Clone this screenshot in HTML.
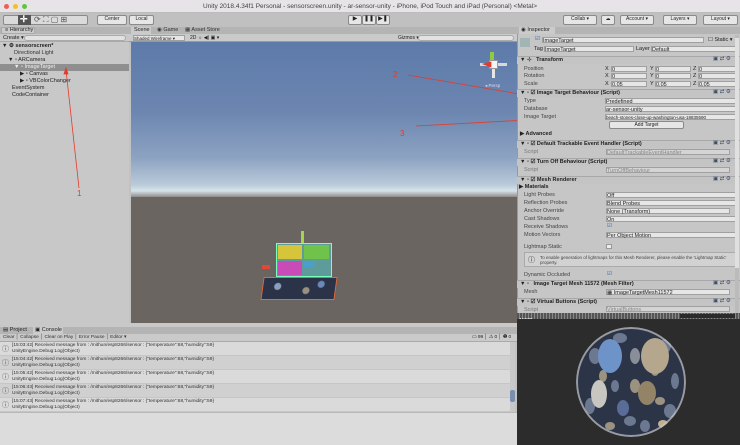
<!DOCTYPE html>
<html><head><meta charset="utf-8"><style>
*{margin:0;padding:0;box-sizing:border-box}
body{width:740px;height:445px;overflow:hidden;background:#c2c2c2;font-family:"Liberation Sans",sans-serif;font-size:5.5px;color:#222;position:relative}
.a{position:absolute}
.t{position:absolute;white-space:nowrap}
.fld{position:absolute;background:#e6e6e6;border:1px solid #a0a0a0;height:6px}
.hdr{position:absolute;left:517px;width:223px;height:8px;background:#c4c4c4;border-top:1px solid #a8a8a8;font-weight:bold}
.btn{position:absolute;background:#e6e6e6;border:1px solid #8a8a8a;border-radius:2px;height:9px;font-size:5px;text-align:center;line-height:7px}
.row{position:absolute;left:0;width:515px;height:14px;background:#dadada;border-bottom:1px solid #c6c6c6}
.row2{background:#d0d0d0}
</style></head><body>
<div class="a" style="left:0;top:0;width:740px;height:13px;background:#e6e4e6;border-bottom:1px solid #bcbcbc"></div>
<div class="a" style="left:4px;top:4px;width:5px;height:5px;border-radius:50%;background:#ec5f57"></div>
<div class="a" style="left:13px;top:4px;width:5px;height:5px;border-radius:50%;background:#f3be2e"></div>
<div class="a" style="left:22px;top:4px;width:5px;height:5px;border-radius:50%;background:#5fc440"></div>
<div class="t" style="left:0;width:740px;top:3px;text-align:center;font-size:6.5px;color:#444">Unity 2018.4.34f1 Personal - sensorscreen.unity - ar-sensor-unity - iPhone, iPod Touch and iPad (Personal) &lt;Metal&gt;</div>
<div class="a" style="left:0;top:13px;width:740px;height:14px;background:#c0c0c0"></div>
<div class="btn" style="left:3px;top:15px;width:85px;height:10px;background:#dadada"></div>
<div class="a" style="left:18px;top:15px;width:13px;height:10px;background:#555"></div>
<div class="t" style="left:20px;top:14px;color:#fff;font-size:9px;font-weight:bold">✛</div>
<div class="t" style="left:34px;top:15px;font-size:8px;color:#555">⟳ ⛶ ▢ ⊞</div>
<div class="btn" style="left:97px;top:15px;width:30px;height:10px">Center</div>
<div class="btn" style="left:129px;top:15px;width:25px;height:10px">Local</div>
<div class="btn" style="left:348px;top:15px;width:14px;height:10px;font-size:6px">▶</div>
<div class="btn" style="left:362px;top:15px;width:14px;height:10px;font-size:6px">❚❚</div>
<div class="btn" style="left:376px;top:15px;width:14px;height:10px;font-size:6px">▶❚</div>
<div class="btn" style="left:563px;top:15px;width:34px;height:10px">Collab ▾</div>
<div class="btn" style="left:601px;top:15px;width:14px;height:10px">☁</div>
<div class="btn" style="left:620px;top:15px;width:34px;height:10px">Account ▾</div>
<div class="btn" style="left:663px;top:15px;width:34px;height:10px">Layers ▾</div>
<div class="btn" style="left:703px;top:15px;width:35px;height:10px">Layout ▾</div>
<div class="a" style="left:0;top:27px;width:129px;height:296px;background:#c8c8c8"></div>
<div class="a" style="left:0;top:27px;width:129px;height:7px;background:#b4b4b4"></div>
<div class="a" style="left:1px;top:27px;width:34px;height:7px;background:#cbcbcb;border:1px solid #aaa"></div>
<div class="t" style="left:5px;top:27px">≡ Hierarchy</div>
<div class="a" style="left:0;top:34px;width:129px;height:8px;background:#cacaca;border-bottom:1px solid #aaa"></div>
<div class="t" style="left:3px;top:35px">Create ▾</div>
<div class="a" style="left:24px;top:35px;width:102px;height:6px;background:#e2e2e2;border-radius:3px;border:1px solid #aaa"></div>
<div class="t" style="left:2px;top:43px;font-weight:bold">▼ ⚙ sensorscreen*</div>
<div class="t" style="left:14px;top:50px;color:#333">Directional Light</div>
<div class="t" style="left:8px;top:57px">▼ ▫ ARCamera</div>
<div class="a" style="left:0;top:64px;width:129px;height:7px;background:#8f8f8f"></div>
<div class="t" style="left:14px;top:64px;color:#eee">▼ ▫ ImageTarget</div>
<div class="t" style="left:20px;top:71px">▶ ▫ Canvas</div>
<div class="t" style="left:20px;top:78px">▶ ▫ VBColorChanger</div>
<div class="t" style="left:12px;top:85px">EventSystem</div>
<div class="t" style="left:12px;top:92px">CodeContainer</div>
<div class="a" style="left:129px;top:27px;width:388px;height:7px;background:#b4b4b4"></div>
<div class="a" style="left:131px;top:27px;width:20px;height:7px;background:#cbcbcb"></div>
<div class="t" style="left:134px;top:27px">Scene</div>
<div class="t" style="left:157px;top:27px;color:#333">◉ Game</div>
<div class="t" style="left:185px;top:27px;color:#333">▦ Asset Store</div>
<div class="a" style="left:129px;top:34px;width:388px;height:8px;background:#cacaca;border-bottom:1px solid #999"></div>
<div class="fld" style="left:133px;top:35px;width:52px;font-size:4.5px">Shaded Wireframe ▾</div>
<div class="t" style="left:190px;top:35px;font-size:5px">2D ☼ ◀) ▣ ▾</div>
<div class="t" style="left:398px;top:35px;font-size:5px">Gizmos ▾</div>
<div class="a" style="left:418px;top:35px;width:96px;height:6px;background:#e2e2e2;border-radius:3px;border:1px solid #aaa"></div>
<div class="a" style="left:131px;top:42px;width:386px;height:155px;background:linear-gradient(#5d7aa9 0%,#6c86b0 45%,#8da3c2 75%,#b9cad9 92%,#d7e3ea 96%,#8e8c8a 100%)"></div>
<div class="a" style="left:131px;top:197px;width:386px;height:126px;background:#6a6560"></div>
<div class="a" style="left:490px;top:52px;width:4px;height:10px;background:#8ecb3f"></div>
<div class="a" style="left:489px;top:60px;width:9px;height:9px;background:#f4f4f4;border:1px solid #999"></div>
<div class="a" style="left:480px;top:63px;width:9px;height:3px;background:#d8d8d8"></div>
<div class="a" style="left:498px;top:63px;width:9px;height:3px;background:#d8d8d8"></div>
<div class="a" style="left:492px;top:69px;width:3px;height:9px;background:#e6e6e6"></div>
<div class="t" style="left:485px;top:83px;color:#dde;font-size:4.5px">◂ Persp</div>
<div class="a" style="left:276px;top:243px;width:56px;height:34px;background:#5e9c9c;border:1px solid #7fb"></div>
<div class="a" style="left:278px;top:245px;width:24px;height:14px;background:#d6c43a"></div>
<div class="a" style="left:304px;top:245px;width:25px;height:14px;background:#6fc34a"></div>
<div class="a" style="left:278px;top:261px;width:24px;height:14px;background:#c84bb8"></div>
<div class="a" style="left:304px;top:261px;width:10px;height:6px;background:#4a9fce"></div>
<div class="a" style="left:301px;top:231px;width:3px;height:12px;background:#a5d64a"></div>
<div class="a" style="left:262px;top:265px;width:8px;height:4px;background:#e04a35"></div>
<div class="a" style="left:262px;top:277px;width:74px;height:23px;background:radial-gradient(circle at 20% 40%,#8aa0c0 0 3px,transparent 4px),radial-gradient(circle at 60% 60%,#9a9080 0 3px,transparent 4px),radial-gradient(circle at 80% 30%,#6a88b8 0 3px,transparent 4px),#2a3348;border:1px solid #e46a3a;transform:skewX(-8deg)"></div>
<svg class="a" style="left:0;top:0" width="740" height="445">
<g stroke="#e43a2a" stroke-width="0.8" fill="#e43a2a">
<line x1="79" y1="188" x2="66" y2="70"/><polygon points="66,68 64,74 68,74"/>
<line x1="408" y1="75" x2="601" y2="108"/><polygon points="604,108 598,105 598,110"/>
<line x1="416" y1="126" x2="600" y2="116"/><polygon points="603,116 597,113 597,119"/>
<polygon points="483,64 491,62 491,67"/>
</g>
<text x="77" y="196" fill="#e43a2a" font-size="8" font-family="Liberation Sans">1</text>
<text x="393" y="77" fill="#e43a2a" font-size="8" font-family="Liberation Sans">2</text>
<text x="400" y="136" fill="#e43a2a" font-size="8" font-family="Liberation Sans">3</text>
</svg>
<div class="a" style="left:517px;top:27px;width:223px;height:291px;background:#c6c6c6;border-left:1px solid #999"></div>
<div class="a" style="left:517px;top:27px;width:223px;height:7px;background:#b4b4b4"></div>
<div class="a" style="left:519px;top:27px;width:36px;height:7px;background:#cbcbcb"></div>
<div class="t" style="left:521px;top:27px">◉ Inspector</div>
<div class="a" style="left:520px;top:38px;width:10px;height:9px;background:#8aa;opacity:.6"></div>
<div class="t" style="left:535px;top:36px;color:#1a5fb4">☑</div>
<div class="fld" style="left:542px;top:37px;width:162px">ImageTarget</div>
<div class="t" style="left:708px;top:37px">☐ Static ▾</div>
<div class="t" style="left:534px;top:46px">Tag</div><div class="fld" style="left:544px;top:46px;width:90px">ImageTarget</div>
<div class="t" style="left:636px;top:46px">Layer</div><div class="fld" style="left:651px;top:46px;width:86px">Default</div>
<div class="hdr" style="top:56px"><span style="margin-left:3px">▼ ⊹ &nbsp; Transform</span></div>
<div class="t" style="left:524px;top:66px;color:#444">Position</div>
<div class="t" style="left:524px;top:73px;color:#444">Rotation</div>
<div class="t" style="left:524px;top:81px;color:#444">Scale</div>
<div class="t" style="left:605px;top:66px">X</div><div class="fld" style="left:611px;top:66px;width:36px">0</div>
<div class="t" style="left:650px;top:66px">Y</div><div class="fld" style="left:655px;top:66px;width:36px">0</div>
<div class="t" style="left:693px;top:66px">Z</div><div class="fld" style="left:698px;top:66px;width:38px">0</div>
<div class="t" style="left:605px;top:73px">X</div><div class="fld" style="left:611px;top:73px;width:36px">0</div>
<div class="t" style="left:650px;top:73px">Y</div><div class="fld" style="left:655px;top:73px;width:36px">0</div>
<div class="t" style="left:693px;top:73px">Z</div><div class="fld" style="left:698px;top:73px;width:38px">0</div>
<div class="t" style="left:605px;top:81px">X</div><div class="fld" style="left:611px;top:81px;width:36px">0.05</div>
<div class="t" style="left:650px;top:81px">Y</div><div class="fld" style="left:655px;top:81px;width:36px">0.05</div>
<div class="t" style="left:693px;top:81px">Z</div><div class="fld" style="left:698px;top:81px;width:38px">0.05</div>
<div class="hdr" style="top:89px"><span style="margin-left:3px">▼ ▫ ☑ Image Target Behaviour (Script)</span></div>
<div class="t" style="left:524px;top:98px;color:#444">Type</div><div class="fld" style="left:605px;top:98px;width:132px">Predefined</div>
<div class="t" style="left:524px;top:106px;color:#444">Database</div><div class="fld" style="left:605px;top:106px;width:132px">ar-sensor-unity</div>
<div class="t" style="left:524px;top:114px;color:#444">Image Target</div><div class="fld" style="left:605px;top:114px;width:132px;font-size:4.5px">beach-stones-close-up-washington-usa-18835590</div>
<div class="btn" style="left:609px;top:121px;width:75px;height:8px">Add Target</div>
<div class="t" style="left:520px;top:131px;font-weight:bold">▶ Advanced</div>
<div class="hdr" style="top:140px"><span style="margin-left:3px">▼ ▫ ☑ Default Trackable Event Handler (Script)</span></div>
<div class="t" style="left:524px;top:149px;color:#777">Script</div><div class="fld" style="left:606px;top:149px;width:124px;background:#d4d4d4;color:#888">DefaultTrackableEventHandler</div>
<div class="hdr" style="top:158px"><span style="margin-left:3px">▼ ▫ ☑ Turn Off Behaviour (Script)</span></div>
<div class="t" style="left:524px;top:167px;color:#777">Script</div><div class="fld" style="left:606px;top:167px;width:124px;background:#d4d4d4;color:#888">TurnOffBehaviour</div>
<div class="hdr" style="top:176px"><span style="margin-left:3px">▼ ▫ ☑ Mesh Renderer</span></div>
<div class="t" style="left:519px;top:184px;font-weight:bold">▶ Materials</div>
<div class="t" style="left:524px;top:192px;color:#444">Light Probes</div><div class="fld" style="left:606px;top:192px;width:131px">Off</div>
<div class="t" style="left:524px;top:200px;color:#444">Reflection Probes</div><div class="fld" style="left:606px;top:200px;width:131px">Blend Probes</div>
<div class="t" style="left:524px;top:208px;color:#444">Anchor Override</div><div class="fld" style="left:606px;top:208px;width:124px">None (Transform)</div>
<div class="t" style="left:524px;top:216px;color:#444">Cast Shadows</div><div class="fld" style="left:606px;top:216px;width:131px">On</div>
<div class="t" style="left:524px;top:224px;color:#444">Receive Shadows</div><div class="t" style="left:607px;top:223px;color:#1a5fb4">☑</div>
<div class="t" style="left:524px;top:232px;color:#444">Motion Vectors</div><div class="fld" style="left:606px;top:232px;width:131px">Per Object Motion</div>
<div class="t" style="left:524px;top:244px;color:#444">Lightmap Static</div><div class="a" style="left:606px;top:244px;width:6px;height:5px;background:#eee;border:1px solid #999"></div>
<div class="a" style="left:524px;top:252px;width:213px;height:15px;background:#d2d2d2;border:1px solid #aaa"></div>
<div class="t" style="left:528px;top:255px;font-size:7px">ⓘ</div>
<div class="t" style="left:540px;top:255px;font-size:4.5px;color:#444;line-height:5px">To enable generation of lightmaps for this Mesh Renderer, please enable the 'Lightmap Static'<br>property.</div>
<div class="t" style="left:524px;top:272px;color:#444">Dynamic Occluded</div><div class="t" style="left:607px;top:271px;color:#1a5fb4">☑</div>
<div class="hdr" style="top:280px"><span style="margin-left:3px">▼ ▫ &nbsp; Image Target Mesh 11572 (Mesh Filter)</span></div>
<div class="t" style="left:524px;top:289px;color:#444">Mesh</div><div class="fld" style="left:606px;top:289px;width:124px">▦ ImageTargetMesh11572</div>
<div class="hdr" style="top:298px"><span style="margin-left:3px">▼ ▫ ☑ Virtual Buttons (Script)</span></div>
<div class="t" style="left:524px;top:307px;color:#777">Script</div><div class="fld" style="left:606px;top:306px;width:124px;background:#d4d4d4;color:#888">VirtualButtons</div>
<div class="a" style="left:735px;top:35px;width:4px;height:282px;background:#bbb"></div>
<div class="a" style="left:735px;top:38px;width:4px;height:230px;background:#e0e0e0"></div>
<div class="t" style="left:713px;top:56px;color:#3a4a6a">▣ ⇄ ⚙</div>
<div class="t" style="left:713px;top:89px;color:#3a4a6a">▣ ⇄ ⚙</div>
<div class="t" style="left:713px;top:140px;color:#3a4a6a">▣ ⇄ ⚙</div>
<div class="t" style="left:713px;top:158px;color:#3a4a6a">▣ ⇄ ⚙</div>
<div class="t" style="left:713px;top:176px;color:#3a4a6a">▣ ⇄ ⚙</div>
<div class="t" style="left:713px;top:280px;color:#3a4a6a">▣ ⇄ ⚙</div>
<div class="t" style="left:713px;top:298px;color:#3a4a6a">▣ ⇄ ⚙</div>
<div class="a" style="left:517px;top:313px;width:223px;height:6px;background:repeating-linear-gradient(90deg,#555 0 2px,#888 2px 3px)"></div>
<div class="a" style="left:680px;top:314px;width:55px;height:4px;background:#2b2b2b"></div>
<div class="t" style="left:519px;top:318px;color:#eee;font-size:5px;font-weight:bold">11572</div>
<div class="a" style="left:517px;top:319px;width:223px;height:126px;background:#2c2c2c"></div>
<svg class="a" style="left:575px;top:326px" width="112" height="112">
<defs><clipPath id="c"><circle cx="56" cy="56" r="55"/></clipPath></defs>
<g clip-path="url(#c)">
<rect width="112" height="112" fill="#2c3548"/>
<g fill="#6c7890">
<ellipse cx="20" cy="30" rx="6" ry="8"/><ellipse cx="45" cy="12" rx="7" ry="5"/><ellipse cx="90" cy="20" rx="6" ry="7"/><ellipse cx="15" cy="80" rx="5" ry="8"/><ellipse cx="55" cy="95" rx="6" ry="5"/><ellipse cx="95" cy="85" rx="6" ry="7"/><ellipse cx="100" cy="55" rx="4" ry="8"/><ellipse cx="40" cy="60" rx="4" ry="6"/><ellipse cx="70" cy="100" rx="5" ry="6"/>
</g>
<g fill="#9c9280">
<ellipse cx="28" cy="50" rx="4" ry="6"/><ellipse cx="60" cy="60" rx="5" ry="7"/><ellipse cx="80" cy="45" rx="4" ry="5"/><ellipse cx="35" cy="100" rx="5" ry="4"/><ellipse cx="85" cy="75" rx="5" ry="4"/>
</g>
<ellipse cx="35" cy="30" rx="12" ry="17" fill="#6d93c8"/>
<ellipse cx="80" cy="30" rx="14" ry="18" fill="#b5a68e"/>
<ellipse cx="24" cy="68" rx="8" ry="14" fill="#c8c6c0"/>
<ellipse cx="72" cy="67" rx="9" ry="12" fill="#938468"/>
<ellipse cx="48" cy="82" rx="6" ry="8" fill="#5a6c98"/>
<ellipse cx="60" cy="30" rx="5" ry="8" fill="#8a8e98"/>
<ellipse cx="88" cy="98" rx="5" ry="4" fill="#c0b090"/>
<circle cx="56" cy="56" r="54" fill="none" stroke="#c8c8c8" stroke-width="2" opacity=".7"/>
</g></svg>
<div class="a" style="left:0;top:323px;width:517px;height:4px;background:#c8c8c8"></div>
<div class="a" style="left:0;top:327px;width:517px;height:7px;background:#b4b4b4"></div>
<div class="t" style="left:3px;top:327px">▤ Project</div>
<div class="a" style="left:33px;top:327px;width:30px;height:7px;background:#cbcbcb"></div>
<div class="t" style="left:35px;top:327px">▣ Console</div>
<div class="a" style="left:0;top:334px;width:517px;height:8px;background:#cacaca;border-bottom:1px solid #aaa"></div>
<div class="t" style="left:3px;top:335px;font-size:4.8px;color:#333">Clear │ Collapse │ Clear on Play │ Error Pause │ Editor ▾</div>
<div class="t" style="left:472px;top:335px;font-size:4.8px">▭ 99 │ ⚠ 0 │ ❶ 0</div>
<div class="row" style="top:342px"></div><div class="row row2" style="top:356px"></div><div class="row" style="top:370px"></div><div class="row row2" style="top:384px"></div><div class="row" style="top:398px"></div>
<div class="a" style="left:0;top:412px;width:517px;height:33px;background:#dcdcdc;border-top:1px solid #b8b8b8"></div>
<div class="a" style="left:510px;top:342px;width:5px;height:70px;background:#c8c8c8"></div>
<div class="a" style="left:510px;top:390px;width:5px;height:12px;background:#7a8fb0;border-radius:2px"></div>
<div class="t" style="left:2px;top:344px;font-size:7px;color:#555">ⓘ</div>
<div class="t" style="left:12px;top:343px;font-size:4.8px;color:#333;line-height:6px">[15:03:42] Received message from : /mithun/esp8266/sensor : {"temperature":68,"humidity":59}<br>UnityEngine.Debug:Log(Object)</div>
<div class="t" style="left:2px;top:358px;font-size:7px;color:#555">ⓘ</div>
<div class="t" style="left:12px;top:357px;font-size:4.8px;color:#333;line-height:6px">[15:04:42] Received message from : /mithun/esp8266/sensor : {"temperature":68,"humidity":59}<br>UnityEngine.Debug:Log(Object)</div>
<div class="t" style="left:2px;top:372px;font-size:7px;color:#555">ⓘ</div>
<div class="t" style="left:12px;top:371px;font-size:4.8px;color:#333;line-height:6px">[15:05:42] Received message from : /mithun/esp8266/sensor : {"temperature":68,"humidity":59}<br>UnityEngine.Debug:Log(Object)</div>
<div class="t" style="left:2px;top:386px;font-size:7px;color:#555">ⓘ</div>
<div class="t" style="left:12px;top:385px;font-size:4.8px;color:#333;line-height:6px">[15:06:43] Received message from : /mithun/esp8266/sensor : {"temperature":68,"humidity":59}<br>UnityEngine.Debug:Log(Object)</div>
<div class="t" style="left:2px;top:400px;font-size:7px;color:#555">ⓘ</div>
<div class="t" style="left:12px;top:399px;font-size:4.8px;color:#333;line-height:6px">[15:07:43] Received message from : /mithun/esp8266/sensor : {"temperature":68,"humidity":59}<br>UnityEngine.Debug:Log(Object)</div>
</body></html>
